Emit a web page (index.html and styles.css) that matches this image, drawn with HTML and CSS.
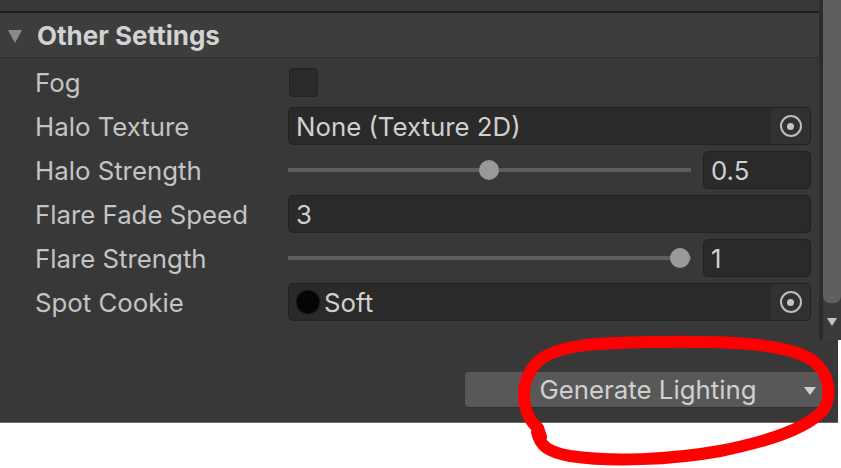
FILE: index.html
```html
<!DOCTYPE html>
<html>
<head>
<meta charset="utf-8">
<link rel="stylesheet" href="styles.css">
</head>
<body>
<div class="window">
  <div class="top">
    <div class="main">
      <div class="strip"></div>
      <div class="header"><span class="fold"></span><span class="title">Other Settings</span></div>
      <div class="rows">
        <div class="row">
          <span class="label">Fog</span>
          <div class="control"><span class="checkbox"></span></div>
        </div>
        <div class="row">
          <span class="label">Halo Texture</span>
          <div class="control">
            <div class="field object">
              <span class="value">None (Texture 2D)</span>
              <span class="picker"><span class="ring"><span class="dot"></span></span></span>
            </div>
          </div>
        </div>
        <div class="row">
          <span class="label">Halo Strength</span>
          <div class="control slider-row">
            <div class="slider"><span class="track"></span><span class="knob" style="left: 49.9%"></span></div>
            <div class="field number"><span class="value">0.5</span></div>
          </div>
        </div>
        <div class="row">
          <span class="label">Flare Fade Speed</span>
          <div class="control">
            <div class="field"><span class="value">3</span></div>
          </div>
        </div>
        <div class="row">
          <span class="label">Flare Strength</span>
          <div class="control slider-row">
            <div class="slider"><span class="track"></span><span class="knob" style="left: 97.3%"></span></div>
            <div class="field number"><span class="value">1</span></div>
          </div>
        </div>
        <div class="row">
          <span class="label">Spot Cookie</span>
          <div class="control">
            <div class="field object">
              <span class="cookie"></span>
              <span class="value tight">Soft</span>
              <span class="picker"><span class="ring"><span class="dot"></span></span></span>
            </div>
          </div>
        </div>
      </div>
    </div>
    <div class="scrollbar">
      <div class="thumb"></div>
      <div class="down"></div>
    </div>
  </div>
  <div class="bottom">
    <button class="generate"><span class="gen-label">Generate Lighting</span><span class="caret"></span></button>
  </div>
  <svg class="annotation" width="841" height="468" viewBox="0 0 841 468">
    <path d="M 541 437 L 538 428 C 520 414 518 378 540 360 C 560 344 600 343 650 342 C 720 341 785 342 812 360 C 830 373 832 395 824 409 C 810 427 770 441 720 451 C 670 460 610 462 570 456 C 548 452 540 446 537 432"
      fill="none" stroke="#ff0000" stroke-width="12" stroke-linecap="round" stroke-linejoin="round"/>
  </svg>
</div>
</body>
</html>
```

FILE: styles.css
```css
* { box-sizing: border-box; }
html, body { margin: 0; padding: 0; background: #ffffff; }
body {
  font-family: Inter, "Noto Sans", "Liberation Sans", sans-serif;
  color: #c4c4c4;
}
.window {
  position: relative;
  width: 841px;
  height: 468px;
  background: #ffffff;
}
.top {
  display: flex;
  height: 340px;
  background: #383838;
}
.main {
  flex: 1;
  display: flex;
  flex-direction: column;
  padding-right: 8px;
}
.strip {
  height: 13px;
  border-bottom: 2px solid #1f1f1f;
  margin-right: -8px;
}
.header {
  height: 45px;
  margin-right: -8px;
  background: #3d3d3d;
  border-bottom: 1px solid #2e2e2e;
  display: flex;
  align-items: center;
  padding-left: 8px;
}
.fold {
  width: 0; height: 0;
  border-left: 7px solid transparent;
  border-right: 7px solid transparent;
  border-top: 13px solid #8a8a8a;
  margin-right: 15px;
  margin-top: 2px;
}
.title {
  font-size: 26px;
  font-weight: 700;
  color: #d2d2d2;
}
.rows {
  padding-top: 2px;
  display: flex;
  flex-direction: column;
}
.row {
  height: 44px;
  display: flex;
  align-items: center;
}
.label {
  width: 288px;
  padding-left: 35px;
  font-size: 25.8px;
  color: #c4c4c4;
  white-space: nowrap;
}
.control {
  flex: 1;
  display: flex;
  align-items: center;
}
.checkbox {
  width: 29px;
  height: 29px;
  margin-left: 1px;
  margin-top: 1px;
  background: #2a2a2a;
  border: 1px solid #212121;
  border-radius: 4px;
}
.field {
  flex: 1;
  height: 38px;
  background: #2a2a2a;
  border: 1px solid #212121;
  border-radius: 5px;
  display: flex;
  align-items: center;
  overflow: hidden;
}
.value {
  font-size: 25.8px;
  color: #d0d0d0;
  padding-left: 7px;
  flex: 1;
  white-space: nowrap;
}
.value.tight { padding-left: 5px; }
.picker {
  width: 39px;
  align-self: stretch;
  background: #313131;
  display: flex;
  align-items: center;
  justify-content: center;
}
.ring {
  width: 22px;
  height: 22px;
  border: 2px solid #bdbdbd;
  border-radius: 50%;
  display: flex;
  align-items: center;
  justify-content: center;
}
.dot {
  width: 7px;
  height: 7px;
  border-radius: 50%;
  background: #c4c4c4;
}
.cookie {
  width: 22px;
  height: 22px;
  border-radius: 50%;
  background: #050505;
  margin-left: 8px;
  box-shadow: 0 0 1px 1px #111;
}
.slider-row { gap: 12px; }
.slider {
  position: relative;
  width: 403px;
  height: 38px;
  display: flex;
  align-items: center;
}
.track {
  width: 100%;
  height: 4px;
  background: #5e5e5e;
}
.knob {
  position: absolute;
  top: 9px;
  width: 20px;
  height: 20px;
  margin-left: -10px;
  border-radius: 50%;
  background: #999999;
}
.field.number { flex: none; width: 108px; }
.scrollbar {
  width: 22px;
  border-left: 4px solid #2c2c2c;
  display: flex;
  flex-direction: column;
  align-items: center;
  background: #3a3a3a;
}
.thumb {
  width: 100%;
  height: 303px;
  background: #5f5f5f;
  border-radius: 0 0 7px 7px;
}
.down {
  margin-top: 15px;
  width: 0; height: 0;
  border-left: 5px solid transparent;
  border-right: 5px solid transparent;
  border-top: 8px solid #c6c6c6;
}
.bottom {
  width: 838px;
  height: 83px;
  background: #383838;
  border-bottom: 1px solid #6a6a6a;
  padding: 32px 7px 0 465px;
}
.generate {
  position: relative;
  width: 366px;
  height: 36px;
  background: #585858;
  border: none;
  border-bottom: 1px solid #2e2e2e;
  border-radius: 4px;
  font-family: inherit;
  font-size: 25.8px;
  color: #d0d0d0;
  padding: 0;
  display: flex;
  align-items: center;
  justify-content: center;
}
.caret {
  position: absolute;
  right: 15px;
  top: 15px;
  width: 0; height: 0;
  border-left: 6px solid transparent;
  border-right: 6px solid transparent;
  border-top: 8px solid #d0d0d0;
}
.annotation {
  position: absolute;
  left: 0;
  top: 0;
  pointer-events: none;
}
```
